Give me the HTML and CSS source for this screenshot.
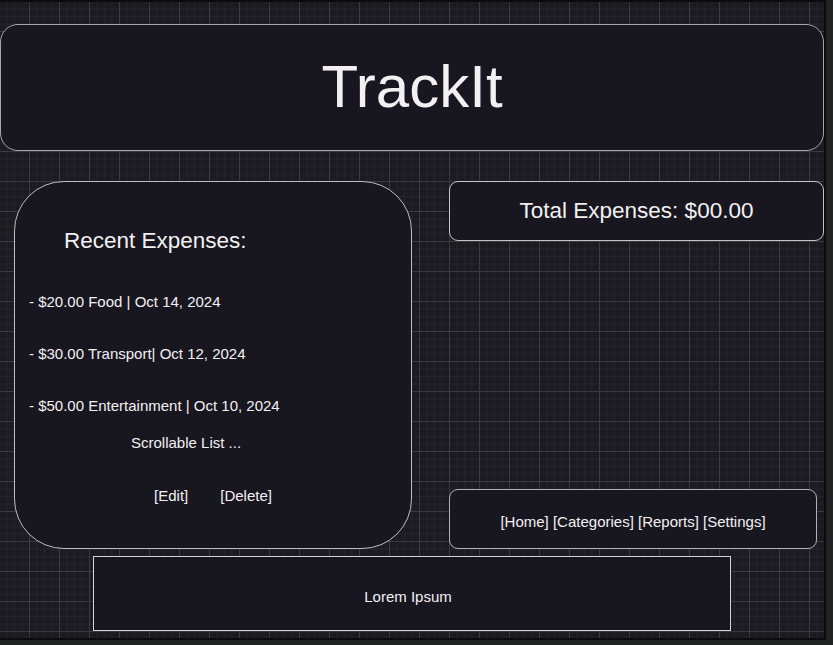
FILE: index.html
```html
<!DOCTYPE html>
<html lang="en">
<head>
<meta charset="utf-8">
<title>TrackIt</title>
<link rel="stylesheet" href="styles.css">
</head>
<body>
<div class="frame">
  <header class="header">
    <h1 class="title">TrackIt</h1>
  </header>
  <section class="main">
    <div class="recent card-big">
      <h2 class="recent-title">Recent Expenses:</h2>
      <ul class="expense-list">
        <li>- $20.00 Food | Oct 14, 2024</li>
        <li>- $30.00 Transport| Oct 12, 2024</li>
        <li>- $50.00 Entertainment | Oct 10, 2024</li>
      </ul>
      <p class="scroll-note">Scrollable List ...</p>
      <div class="actions">
        <span>[Edit]</span>
        <span>[Delete]</span>
      </div>
    </div>
    <div class="side">
      <div class="total">Total Expenses: $00.00</div>
      <nav class="nav">[Home] [Categories] [Reports] [Settings]</nav>
    </div>
  </section>
  <footer class="footer">Lorem Ipsum</footer>
</div>
</body>
</html>
```

FILE: styles.css
```css
html, body {
  margin: 0;
  padding: 0;
}
body {
  background: #202221;
  font-family: "Liberation Sans", Arial, sans-serif;
  color: #f3f0f3;
  width: 833px;
  height: 645px;
  overflow: hidden;
}
.frame {
  width: 824px;
  height: 636px;
  border-top: 2px solid #0b0b0b;
  border-right: 2px solid #0b0b0b;
  border-bottom: 2px solid #0b0b0b;
  background-color: #1c1b22;
  background-image:
    linear-gradient(to right, transparent 29px, #3a3940 29px, #3a3940 30px),
    linear-gradient(to bottom, transparent 29px, #3a3940 29px, #3a3940 30px),
    linear-gradient(to right, transparent 6.5px, #25242b 6.5px, #25242b 7.5px),
    linear-gradient(to bottom, transparent 6.5px, #25242b 6.5px, #25242b 7.5px);
  background-size: 30px 30px, 30px 30px, 7.5px 7.5px, 7.5px 7.5px;
  overflow: hidden;
}
.header {
  box-sizing: border-box;
  margin-top: 22px;
  height: 127px;
  width: 824px;
  border: 1px solid #a6a6a6;
  border-radius: 18px;
  background: #18161f;
  display: flex;
  align-items: center;
  justify-content: center;
  padding-bottom: 3px;
}
.title {
  margin: 0;
  font-size: 60px;
  font-weight: normal;
  color: #f3f0f3;
}
.main {
  display: grid;
  grid-template-columns: 398px 375px;
  column-gap: 37px;
  padding-left: 14px;
  margin-top: 30px;
  height: 368px;
}
.card-big {
  box-sizing: border-box;
  height: 368px;
  border: 1px solid #bdbdbd;
  border-radius: 50px;
  background: #18161f;
  padding-top: 46px;
}
.recent-title {
  margin: 0 0 0 49px;
  font-size: 22.5px;
  line-height: 26px;
  font-weight: normal;
}
.expense-list {
  list-style: none;
  margin: 39px 0 0 0;
  padding: 0 0 0 14px;
  display: flex;
  flex-direction: column;
  gap: 35px;
  font-size: 15px;
  line-height: 17px;
}
.scroll-note {
  margin: 20px 0 0 116px;
  font-size: 15px;
  line-height: 17px;
}
.actions {
  margin-top: 36px;
  display: flex;
  justify-content: center;
  gap: 32px;
  font-size: 15px;
  line-height: 17px;
}
.side {
  display: flex;
  flex-direction: column;
  justify-content: space-between;
  align-items: flex-start;
}
.total {
  box-sizing: border-box;
  width: 375px;
  height: 60px;
  border: 1px solid #c4c4c4;
  border-radius: 9px;
  background: #18161f;
  display: flex;
  align-items: center;
  justify-content: center;
  font-size: 22.5px;
}
.nav {
  box-sizing: border-box;
  width: 368px;
  height: 60px;
  border: 1px solid #b0b0b0;
  border-radius: 9px;
  background: #18161f;
  display: flex;
  align-items: center;
  justify-content: center;
  padding-top: 4px;
  font-size: 15px;
}
.footer {
  box-sizing: border-box;
  margin: 7px 0 0 93px;
  width: 638px;
  height: 75px;
  border: 1px solid #d4d4d4;
  background: #18161f;
  display: flex;
  align-items: center;
  justify-content: center;
  padding-top: 6px;
  padding-right: 8px;
  font-size: 15px;
}
```
